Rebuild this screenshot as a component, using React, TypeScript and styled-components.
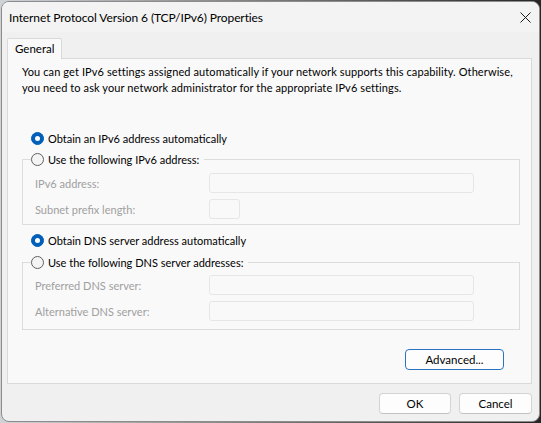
import styled, { createGlobalStyle } from "styled-components";

const Global = createGlobalStyle`
  html, body { margin: 0; height: 100%; }
  body {
    background: linear-gradient(90deg, #cfd3d8 0%, #7a7a7a 50%, #262626 100%);
    font-family: Lato, "Liberation Sans", sans-serif;
    font-size: 11px;
    letter-spacing: 0;
    color: #000;
  }
  #root { padding: 1px 0 0 1px; }
`;

const Window = styled.div`
  width: 539px;
  height: 421px;
  box-sizing: border-box;
  border: 1px solid #8c8c8c;
  border-radius: 8px;
  background: #f0f0f0;
  display: flex;
  flex-direction: column;
  overflow: hidden;
`;

const TitleBar = styled.div`
  height: 30px;
  flex: none;
  display: flex;
  align-items: center;
  justify-content: space-between;
  padding: 0 8px 0 7px;
  background: #f3f3f3;
`;

const Title = styled.span`
  font-size: 12px;
  letter-spacing: -0.1px;
`;

const CloseButton = styled.div`
  width: 11px;
  height: 11px;
  display: flex;
  svg { display: block; }
`;

const Body = styled.div`
  flex: 1;
  display: flex;
  flex-direction: column;
  padding: 6px 7px 7px 5px;
`;

const TabStrip = styled.div`
  display: flex;
  position: relative;
  z-index: 1;
  margin-bottom: -1px;
`;

const Tab = styled.div`
  height: 21px;
  box-sizing: border-box;
  padding: 0 7px 1px 7px;
  display: flex;
  align-items: center;
  font-size: 11.5px;
  border: 1px solid #d9d9d9;
  border-bottom: none;
  background: #f9f9f9;
  border-radius: 2px 2px 0 0;
`;

const Panel = styled.div`
  height: 326px;
  box-sizing: border-box;
  border: 1px solid #d9d9d9;
  background: #f9f9f9;
  padding: 5px 11px 13px 14px;
  display: flex;
  flex-direction: column;
`;

const Intro = styled.p`
  margin: 0 0 34px 0;
  line-height: 16px;
  letter-spacing: 0.1px;
  white-space: nowrap;
`;

const RadioRow = styled.label<{ $gap?: number }>`
  display: flex;
  align-items: center;
  height: 16px;
  margin: ${(p) => p.$gap ?? 0}px 0 0 9px;
  gap: 4px;
  white-space: nowrap;
`;

const RadioDot = styled.span<{ $checked: boolean }>`
  width: 13px;
  height: 13px;
  box-sizing: border-box;
  border-radius: 50%;
  flex: none;
  display: flex;
  align-items: center;
  justify-content: center;
  background: ${(p) => (p.$checked ? "#005fb8" : "#f4f4f4")};
  border: 1px solid ${(p) => (p.$checked ? "#005fb8" : "#606060")};
  &::after {
    content: "";
    display: ${(p) => (p.$checked ? "block" : "none")};
    width: 5px;
    height: 5px;
    border-radius: 50%;
    background: #fff;
  }
`;

const Group = styled.fieldset<{ $gap: number; $bottom: number; $top: number }>`
  margin: ${(p) => p.$gap}px 0 0 0;
  padding: ${(p) => p.$top}px 0 ${(p) => p.$bottom}px 8px;
  border: 1px solid #dcdcdc;
  border-radius: 0;
  display: flex;
  flex-direction: column;
  gap: 6px;
  min-width: 0;
`;

const Legend = styled.legend`
  padding: 0 5px 0 0;
  margin: 0;
  height: 16px;
  display: flex;
  align-items: center;
  gap: 4px;
  white-space: nowrap;
`;

const FieldRow = styled.div`
  display: grid;
  grid-template-columns: 174px auto;
  align-items: center;
  height: 20px;
  padding-left: 4px;
  color: #a0a0a0;
`;

const Field = styled.div<{ $width: number }>`
  width: ${(p) => p.$width}px;
  height: 20px;
  box-sizing: border-box;
  border: 1px solid #e6e6e6;
  border-radius: 3px;
  background: #f9f9f9;
`;

const ActionRow = styled.div`
  display: flex;
  justify-content: flex-end;
  margin-top: 19px;
  padding-right: 16px;
`;

const Button = styled.button<{ $width: number; $focused?: boolean }>`
  width: ${(p) => p.$width}px;
  height: 21px;
  box-sizing: border-box;
  padding: 0;
  font: inherit;
  font-size: 11.5px;
  letter-spacing: inherit;
  color: #000;
  background: #fdfdfd;
  border: 1px solid ${(p) => (p.$focused ? "#2b73c0" : "#d3d3d3")};
  border-bottom-color: ${(p) => (p.$focused ? "#2b73c0" : "#c2c2c2")};
  border-radius: 4px;
  display: flex;
  align-items: center;
  justify-content: center;
`;

const Footer = styled.div`
  display: flex;
  justify-content: flex-end;
  gap: 8px;
  margin-top: 9px;
`;

function Radio({ checked, label, gap }: { checked: boolean; label: string; gap?: number }) {
  return (
    <RadioRow $gap={gap}>
      <RadioDot $checked={checked} />
      <span>{label}</span>
    </RadioRow>
  );
}

export default function App() {
  return (
    <>
      <Global />
      <Window>
        <TitleBar>
          <Title>Internet Protocol Version 6 (TCP/IPv6) Properties</Title>
          <CloseButton>
            <svg width="11" height="11" viewBox="0 0 11 11">
              <path d="M0.5 0.5 L10.5 10.5 M10.5 0.5 L0.5 10.5" stroke="#1b1b1b" strokeWidth="1" fill="none" />
            </svg>
          </CloseButton>
        </TitleBar>
        <Body>
          <TabStrip>
            <Tab>General</Tab>
          </TabStrip>
          <Panel>
            <Intro>
              You can get IPv6 settings assigned automatically if your network supports this capability. Otherwise,
              <br />
              you need to ask your network administrator for the appropriate IPv6 settings.
            </Intro>
            <Radio checked label="Obtain an IPv6 address automatically" />
            <Group $gap={5} $top={6} $bottom={5}>
              <Legend>
                <RadioDot $checked={false} />
                <span>Use the following IPv6 address:</span>
              </Legend>
              <FieldRow>
                <span>IPv6 address:</span>
                <Field $width={265} />
              </FieldRow>
              <FieldRow>
                <span>Subnet prefix length:</span>
                <Field $width={31} />
              </FieldRow>
            </Group>
            <Radio checked gap={7} label="Obtain DNS server address automatically" />
            <Group $gap={6} $top={5} $bottom={8}>
              <Legend>
                <RadioDot $checked={false} />
                <span>Use the following DNS server addresses:</span>
              </Legend>
              <FieldRow>
                <span>Preferred DNS server:</span>
                <Field $width={265} />
              </FieldRow>
              <FieldRow>
                <span>Alternative DNS server:</span>
                <Field $width={265} />
              </FieldRow>
            </Group>
            <ActionRow>
              <Button $width={99} $focused>Advanced...</Button>
            </ActionRow>
          </Panel>
          <Footer>
            <Button $width={72}>OK</Button>
            <Button $width={73}>Cancel</Button>
          </Footer>
        </Body>
      </Window>
    </>
  );
}
